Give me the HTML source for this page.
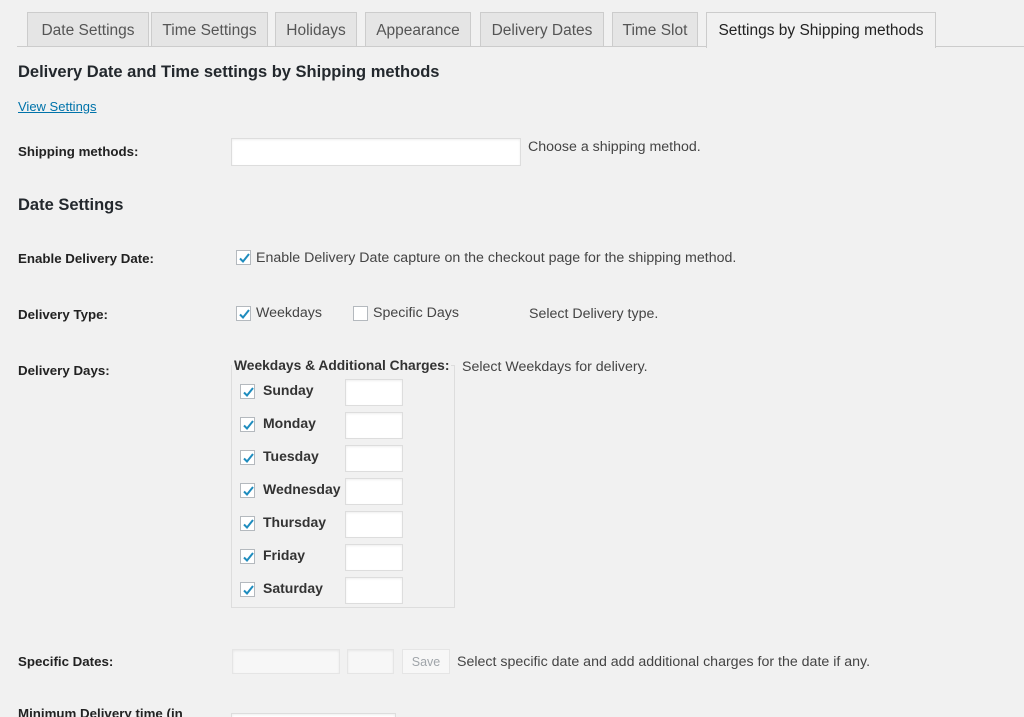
<!DOCTYPE html>
<html style="overflow:hidden"><head><meta charset="utf-8"><style>
html,body{overflow:hidden}
body{margin:0;width:1024px;height:717px;background:#f1f1f1;font-family:"Liberation Sans",sans-serif;color:#444;font-size:14.2px;position:relative}
.a{position:absolute;white-space:nowrap}
.tab{position:absolute;top:12px;height:34px;border:1px solid #ccc;border-bottom:none;background:#e5e5e5;color:#555;font-size:15.5px;line-height:36px;text-align:center;box-sizing:border-box}
.tab.act{background:#f1f1f1;color:#222;height:36px}
.line{position:absolute;left:17px;right:0;top:46px;border-top:1px solid #ccc}
.lbl{position:absolute;left:18px;font-weight:bold;color:#222;font-size:13.3px}
.h{position:absolute;left:18px;font-size:16.5px;font-weight:bold;color:#23282d}
.inp{position:absolute;background:#fff;border:1px solid #ddd;box-shadow:inset 0 1px 2px rgba(0,0,0,.07);box-sizing:border-box}
.cb{position:absolute;width:15px;height:15px;background:#fff;border:1px solid #b4b9be;box-sizing:border-box}
.cb svg{position:absolute;left:1px;top:1px}
.day{position:absolute;left:263px;font-weight:bold;color:#333;font-size:14px}
</style></head><body>
<div class="line"></div>
<div class="tab" style="left:27px;width:122px">Date Settings</div>
<div class="tab" style="left:151px;width:117px">Time Settings</div>
<div class="tab" style="left:275px;width:82px">Holidays</div>
<div class="tab" style="left:365px;width:106px">Appearance</div>
<div class="tab" style="left:480px;width:124px">Delivery Dates</div>
<div class="tab" style="left:612px;width:86px">Time Slot</div>
<div class="tab act" style="left:706px;width:230px">Settings by Shipping methods</div>

<div class="h" style="top:63px">Delivery Date and Time settings by Shipping methods</div>
<div class="a" style="left:18px;top:99px;color:#0073aa;text-decoration:underline;font-size:13px">View Settings</div>

<div class="lbl" style="top:144px">Shipping methods:</div>
<div class="inp" style="left:231px;top:138px;width:290px;height:28px"></div>
<div class="a" style="left:528px;top:139px">Choose a shipping method.</div>

<div class="h" style="top:196px">Date Settings</div>

<div class="lbl" style="top:251px">Enable Delivery Date:</div>
<div class="cb" style="left:236px;top:250px"><svg width="13" height="13" viewBox="0 0 13 13"><path d="M2 6.5l3 3 6-7.5" fill="none" stroke="#1e8cbe" stroke-width="2"/></svg></div>
<div class="a" style="left:256px;top:250px">Enable Delivery Date capture on the checkout page for the shipping method.</div>

<div class="lbl" style="top:307px">Delivery Type:</div>
<div class="cb" style="left:236px;top:306px"><svg width="13" height="13" viewBox="0 0 13 13"><path d="M2 6.5l3 3 6-7.5" fill="none" stroke="#1e8cbe" stroke-width="2"/></svg></div>
<div class="a" style="left:256px;top:305px">Weekdays</div>
<div class="cb" style="left:353px;top:306px"></div>
<div class="a" style="left:373px;top:305px">Specific Days</div>
<div class="a" style="left:529px;top:306px">Select Delivery type.</div>

<div class="lbl" style="top:363px">Delivery Days:</div>
<div style="position:absolute;left:231px;top:365px;width:224px;height:243px;border:1px solid #ddd;box-sizing:border-box"></div>
<div class="a" style="left:232px;top:358px;background:#f1f1f1;padding:0 2px;font-weight:bold;color:#333;font-size:13.8px">Weekdays &amp; Additional Charges:</div>
<div class="a" style="left:462px;top:359px">Select Weekdays for delivery.</div>

<div id="days"></div>
<script>
var d=["Sunday","Monday","Tuesday","Wednesday","Thursday","Friday","Saturday"],h="";
d.forEach(function(n,i){var y=379+i*33;
h+='<div class="cb" style="left:240px;top:'+(y+5)+'px"><svg width="13" height="13" viewBox="0 0 13 13"><path d="M2 6.5l3 3 6-7.5" fill="none" stroke="#1e8cbe" stroke-width="2"/></svg></div>';
h+='<div class="day" style="top:'+(y+3)+'px">'+n+'</div>';
h+='<div class="inp" style="left:345px;top:'+y+'px;width:58px;height:27px"></div>';});
document.getElementById("days").innerHTML=h;
</script>

<div class="lbl" style="top:654px">Specific Dates:</div>
<div class="inp" style="left:232px;top:649px;width:108px;height:25px;background:#f7f7f7;border-color:#e5e5e5"></div>
<div class="inp" style="left:347px;top:649px;width:47px;height:25px;background:#f7f7f7;border-color:#e5e5e5"></div>
<div class="a" style="left:402px;top:649px;width:48px;height:25px;border:1px solid #e5e5e5;background:#f7f7f7;color:#a0a5aa;text-align:center;line-height:24px;box-sizing:border-box;font-size:12.5px">Save</div>
<div class="a" style="left:457px;top:654px">Select specific date and add additional charges for the date if any.</div>

<div class="lbl" style="top:706px">Minimum Delivery time (in</div>
<div class="inp" style="left:231px;top:713px;width:165px;height:28px"></div>
</body></html>
